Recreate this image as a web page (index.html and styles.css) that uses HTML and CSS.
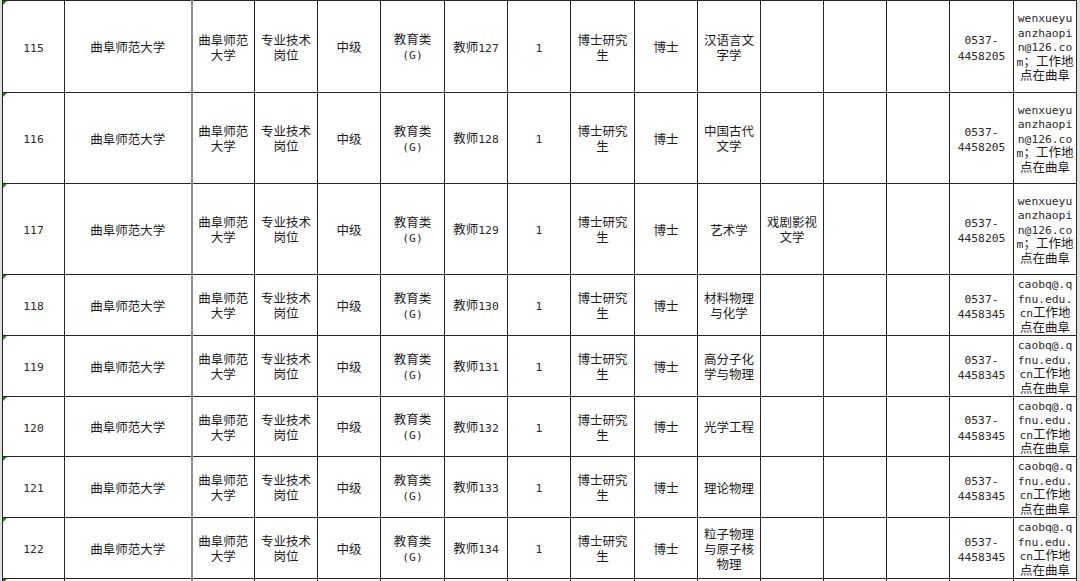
FILE: index.html
```html
<!DOCTYPE html>
<html lang="zh-CN">
<head>
<meta charset="utf-8">
<title>岗位表</title>
<link rel="stylesheet" href="styles.css">
</head>
<body>
<div class="sheet">
<table class="grid">
<colgroup>
<col class="w62"><col class="w127"><col class="w63"><col class="w63"><col class="w63"><col class="w64"><col class="w63"><col class="w63"><col class="w64"><col class="w63"><col class="w63"><col class="w63"><col class="w63"><col class="w63"><col class="w64"><col class="w63">
</colgroup>
<tbody>
<tr class="r92">
<td class="num"><span class="m">115</span></td><td>曲阜师范大学</td><td class="split">曲阜师范<br>大学</td><td>专业技术<br>岗位</td><td>中级</td><td>教育类<br><span class="m">(G)</span></td><td>教师<span class="m">127</span></td><td><span class="m">1</span></td><td>博士研究<br>生</td><td>博士</td><td>汉语言文<br>字学</td><td></td><td></td><td></td><td><span class="m">0537-<br>4458205</span></td><td class="mail"><span class="m">wenxueyu<br>anzhaopi<br>n@126.co<br>m</span>；工作地<br>点在曲阜</td>
</tr>
<tr class="r91">
<td class="num"><span class="m">116</span></td><td>曲阜师范大学</td><td class="split">曲阜师范<br>大学</td><td>专业技术<br>岗位</td><td>中级</td><td>教育类<br><span class="m">(G)</span></td><td>教师<span class="m">128</span></td><td><span class="m">1</span></td><td>博士研究<br>生</td><td>博士</td><td>中国古代<br>文学</td><td></td><td></td><td></td><td><span class="m">0537-<br>4458205</span></td><td class="mail"><span class="m">wenxueyu<br>anzhaopi<br>n@126.co<br>m</span>；工作地<br>点在曲阜</td>
</tr>
<tr class="r91">
<td class="num"><span class="m">117</span></td><td>曲阜师范大学</td><td class="split">曲阜师范<br>大学</td><td>专业技术<br>岗位</td><td>中级</td><td>教育类<br><span class="m">(G)</span></td><td>教师<span class="m">129</span></td><td><span class="m">1</span></td><td>博士研究<br>生</td><td>博士</td><td>艺术学</td><td>戏剧影视<br>文学</td><td></td><td></td><td><span class="m">0537-<br>4458205</span></td><td class="mail"><span class="m">wenxueyu<br>anzhaopi<br>n@126.co<br>m</span>；工作地<br>点在曲阜</td>
</tr>
<tr class="r61">
<td class="num"><span class="m">118</span></td><td>曲阜师范大学</td><td class="split">曲阜师范<br>大学</td><td>专业技术<br>岗位</td><td>中级</td><td>教育类<br><span class="m">(G)</span></td><td>教师<span class="m">130</span></td><td><span class="m">1</span></td><td>博士研究<br>生</td><td>博士</td><td>材料物理<br>与化学</td><td></td><td></td><td></td><td><span class="m">0537-<br>4458345</span></td><td class="mail"><span class="m">caobq@.q<br>fnu.edu.<br>cn</span>工作地<br>点在曲阜</td>
</tr>
<tr class="r61">
<td class="num"><span class="m">119</span></td><td>曲阜师范大学</td><td class="split">曲阜师范<br>大学</td><td>专业技术<br>岗位</td><td>中级</td><td>教育类<br><span class="m">(G)</span></td><td>教师<span class="m">131</span></td><td><span class="m">1</span></td><td>博士研究<br>生</td><td>博士</td><td>高分子化<br>学与物理</td><td></td><td></td><td></td><td><span class="m">0537-<br>4458345</span></td><td class="mail"><span class="m">caobq@.q<br>fnu.edu.<br>cn</span>工作地<br>点在曲阜</td>
</tr>
<tr class="r60">
<td class="num"><span class="m">120</span></td><td>曲阜师范大学</td><td class="split">曲阜师范<br>大学</td><td>专业技术<br>岗位</td><td>中级</td><td>教育类<br><span class="m">(G)</span></td><td>教师<span class="m">132</span></td><td><span class="m">1</span></td><td>博士研究<br>生</td><td>博士</td><td>光学工程</td><td></td><td></td><td></td><td><span class="m">0537-<br>4458345</span></td><td class="mail"><span class="m">caobq@.q<br>fnu.edu.<br>cn</span>工作地<br>点在曲阜</td>
</tr>
<tr class="r61">
<td class="num"><span class="m">121</span></td><td>曲阜师范大学</td><td class="split">曲阜师范<br>大学</td><td>专业技术<br>岗位</td><td>中级</td><td>教育类<br><span class="m">(G)</span></td><td>教师<span class="m">133</span></td><td><span class="m">1</span></td><td>博士研究<br>生</td><td>博士</td><td>理论物理</td><td></td><td></td><td></td><td><span class="m">0537-<br>4458345</span></td><td class="mail"><span class="m">caobq@.q<br>fnu.edu.<br>cn</span>工作地<br>点在曲阜</td>
</tr>
<tr class="r61">
<td class="num"><span class="m">122</span></td><td>曲阜师范大学</td><td class="split">曲阜师范<br>大学</td><td>专业技术<br>岗位</td><td>中级</td><td>教育类<br><span class="m">(G)</span></td><td>教师<span class="m">134</span></td><td><span class="m">1</span></td><td>博士研究<br>生</td><td>博士</td><td>粒子物理<br>与原子核<br>物理</td><td></td><td></td><td></td><td><span class="m">0537-<br>4458345</span></td><td class="mail"><span class="m">caobq@.q<br>fnu.edu.<br>cn</span>工作地<br>点在曲阜</td>
</tr>
<tr class="r61">
<td class="num"></td><td></td><td class="split"></td><td></td><td></td><td></td><td></td><td></td><td></td><td></td><td></td><td></td><td></td><td></td><td></td><td></td>
</tr>
</tbody>
</table>
</div>
</body>
</html>
```
FILE: styles.css
```css
html, body {
  margin: 0;
  padding: 0;
}
body {
  background: #dedede;
  overflow: hidden;
  font-family: "Noto Sans CJK SC", "Noto Sans", sans-serif;
  font-size: 12.5px;
  color: #1c1c1c;
}
.sheet {
  padding-left: 2px;
  height: 581px;
  overflow: hidden;
}
.grid {
  border-collapse: collapse;
  table-layout: fixed;
  width: 1075px;
  background: #fff;
}
.w62 { width: 62px; }
.w63 { width: 63px; }
.w64 { width: 64px; }
.w127 { width: 127px; }
.grid td {
  border: 1px solid #262626;
  padding: 0 1px;
  text-align: center;
  vertical-align: middle;
  line-height: 15px;
  white-space: nowrap;
  overflow: hidden;
  position: relative;
}
.grid td.split {
  border-left: 2px solid #8c8c8c;
}
.r92 { height: 92px; }
.r91 { height: 91px; }
.r61 { height: 61px; }
.r60 { height: 60px; }
.m {
  font-family: "DejaVu Sans Mono", "Liberation Mono", monospace;
  font-size: 11.3px;
  line-height: 1;
  color: #2a2a2a;
}
.grid td.mail {
  line-height: 14.5px;
  padding: 0;
}
.grid td.num::before {
  content: "";
  position: absolute;
  left: 0;
  top: 0;
  border-top: 4px solid #2f7a2f;
  border-right: 4px solid transparent;
}
```
